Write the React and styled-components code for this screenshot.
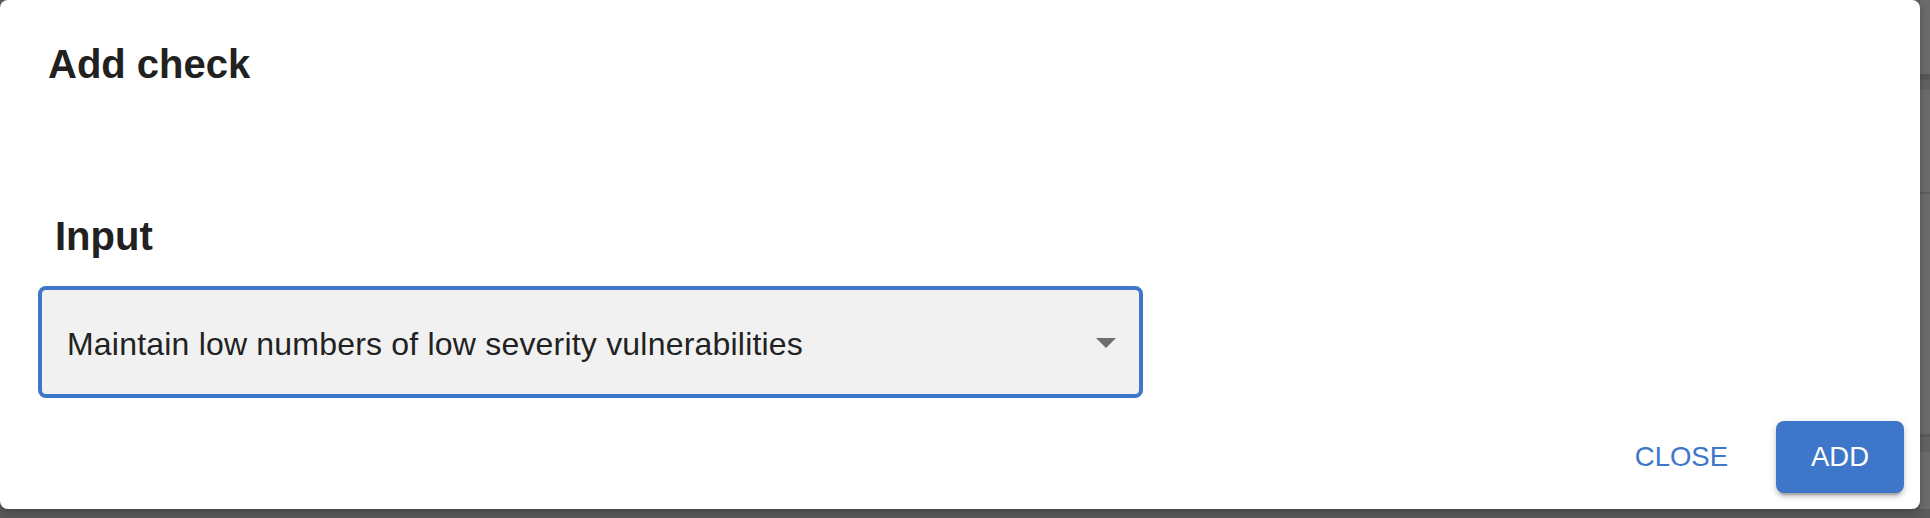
import React from 'react';
import styled, { createGlobalStyle } from 'styled-components';

const GlobalStyle = createGlobalStyle`
  html, body {
    margin: 0;
    padding: 0;
    background: #5c5c5c;
    font-family: "Liberation Sans", Arial, sans-serif;
  }
`

const Screen = styled.div`
  display: grid;
  grid-template-columns: 1920px 10px;
  grid-template-rows: 509px 9px;
  width: 1930px;
  height: 518px;
  overflow: hidden;
`

const SideStrip = styled.div`
  background:
    linear-gradient(
      to bottom,
      #6c6c6c 0,
      #6c6c6c 74px,
      #575757 74px,
      #595959 80px,
      #626262 80px,
      #626262 90px,
      #6c6c6c 90px,
      #6c6c6c 192px,
      #5f5f5f 192px,
      #5f5f5f 194px,
      #6c6c6c 194px,
      #6c6c6c 434px,
      #5a5a5a 434px,
      #5a5a5a 437px,
      #636363 437px,
      #636363 452px,
      #6c6c6c 452px
    );
`

const Dialog = styled.div`
  display: flex;
  flex-direction: column;
  background: #ffffff;
  border-radius: 8px;
  box-shadow: 0 4px 10px rgba(0, 0, 0, 0.25);
  color: #212121;
  position: relative;
  z-index: 1;
`

const Title = styled.h2`
  margin: 0;
  padding: 32px 48px;
  font-size: 40px;
  line-height: 64px;
  font-weight: 700;
  color: #212121;
`

const Content = styled.div`
  display: flex;
  flex-direction: column;
  padding: 76px 0 7px 38px;
`

const Label = styled.div`
  padding-left: 17px;
  font-size: 40px;
  line-height: 64px;
  font-weight: 700;
  color: #212121;
  margin-bottom: 18px;
`

const SelectBox = styled.div`
  display: flex;
  align-items: center;
  justify-content: space-between;
  box-sizing: border-box;
  width: 1105px;
  height: 112px;
  padding: 3px 23px 0 25px;
  border: 4px solid #3e76c9;
  border-radius: 8px;
  background: #f1f1f1;
`

const SelectText = styled.span`
  font-size: 32px;
  line-height: 40px;
  letter-spacing: 0.2px;
  color: #222222;
`

const Caret = styled.span`
  width: 0;
  height: 0;
  margin-top: -1px;
  border-left: 10px solid transparent;
  border-right: 10px solid transparent;
  border-top: 10px solid #6e6e6e;
`

const Actions = styled.div`
  display: flex;
  justify-content: flex-end;
  align-items: center;
  gap: 16px;
  padding: 16px;
`

const Button = styled.button`
  display: flex;
  align-items: center;
  justify-content: center;
  height: 72px;
  padding: 0 ${p => (p.$contained ? '0' : '32px')};
  width: ${p => (p.$contained ? '128px' : 'auto')};
  border: none;
  border-radius: 8px;
  font-family: "Liberation Sans", Arial, sans-serif;
  font-size: 27.5px;
  font-weight: 400;
  text-transform: uppercase;
  color: ${p => (p.$contained ? '#ffffff' : '#3e76c9')};
  background: ${p => (p.$contained ? '#3e76c9' : 'transparent')};
  box-shadow: ${p =>
    p.$contained
      ? '0 6px 2px -4px rgba(0,0,0,0.2), 0 4px 4px 0 rgba(0,0,0,0.14), 0 2px 10px 0 rgba(0,0,0,0.12)'
      : 'none'};
  cursor: pointer;
`

const BottomStrip = styled.div`
  grid-column: 1 / 3;
  background: #5c5c5c;
`

export default function App() {
  return (
    <>
      <GlobalStyle />
      <Screen>
        <Dialog>
          <Title>Add check</Title>
          <Content>
            <Label>Input</Label>
            <SelectBox>
              <SelectText>Maintain low numbers of low severity vulnerabilities</SelectText>
              <Caret />
            </SelectBox>
          </Content>
          <Actions>
            <Button>Close</Button>
            <Button $contained>Add</Button>
          </Actions>
        </Dialog>
        <SideStrip />
        <BottomStrip />
      </Screen>
    </>
  );
}
